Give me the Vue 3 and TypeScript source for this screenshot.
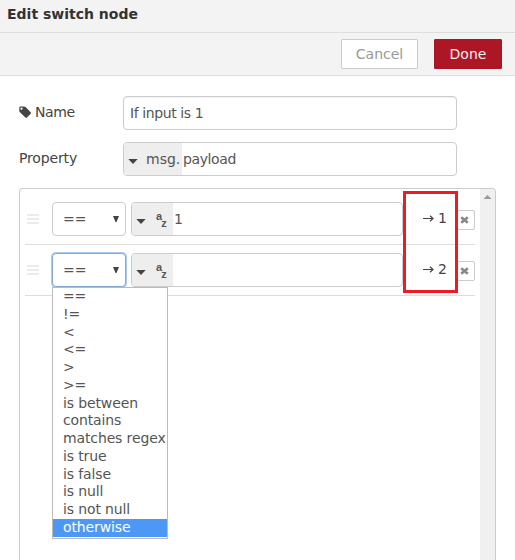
<script setup lang="ts">
interface Rule {
  id: number
  value: string
  focused: boolean
}

const rules: Rule[] = [
  { id: 1, value: '1', focused: false },
  { id: 2, value: '', focused: true },
]

const operators: string[] = [
  '==', '!=', '<', '<=', '>', '>=', 'is between', 'contains',
  'matches regex', 'is true', 'is false', 'is null', 'is not null', 'otherwise',
]
const selected = 'otherwise'
</script>

<template>
  <div class="tray">
    <header class="title">Edit switch node</header>
    <div class="toolbar">
      <button class="btn">Cancel</button>
      <button class="btn primary">Done</button>
    </div>
    <main class="form">
      <div class="field">
        <label class="label tight">
          <svg class="tag" width="13" height="13" viewBox="0 0 13 13">
            <path fill-rule="evenodd" d="M0.3 1.5Q0.3 0.5 1.3 0.5H5Q6 0.5 6.8 1.3L11.7 6.2Q12.5 7 11.7 7.8L8 11.6Q7.2 12.3 6.4 11.6L1.2 6.5Q0.3 5.7 0.3 4.7ZM2.5 1.6A1.1 1.1 0 1 0 2.5 3.8A1.1 1.1 0 1 0 2.5 1.6Z" />
          </svg>Name</label>
        <div class="box wide name">If input is 1</div>
      </div>
      <div class="field">
        <label class="label">Property</label>
        <div class="box wide">
          <span class="type msg"><svg class="caret" width="10" height="5" viewBox="0 0 10 5"><path d="M0.3 0H9.7L5 5Z" /></svg>msg.</span>
          <span class="payload">payload</span>
        </div>
      </div>
      <section class="list">
        <div class="rules">
          <div v-for="rule in rules" :key="rule.id" class="rule">
            <span class="grip"><i></i><i></i><i></i></span>
            <div class="select-wrap">
              <div class="box select" :class="{ focused: rule.focused }">
                <span>==</span>
                <svg width="6" height="6" viewBox="0 0 6 6"><path d="M0 0H6L3.5 6H2.5Z" /></svg>
              </div>
              <ul v-if="rule.focused" class="menu">
                <li v-for="op in operators" :key="op" :class="{ active: op === selected }">{{ op }}</li>
              </ul>
            </div>
            <div class="box value">
              <span class="type string">
                <svg class="caret" width="10" height="5" viewBox="0 0 10 5"><path d="M0.3 0H9.7L5 5Z" /></svg>
                <span class="az"><b>a</b><b class="z">z</b></span>
              </span>
              <span class="val">{{ rule.value }}</span>
            </div>
            <span class="output"><svg width="11" height="7" viewBox="0 0 11 7"><path d="M0 3.5H10M7 0.8L10 3.5L7 6.2" /></svg>{{ rule.id }}</span>
            <button class="remove">
              <svg width="9" height="8" viewBox="0 0 9 8"><path d="M1.2 1.2L7.8 6.8M7.8 1.2L1.2 6.8" /></svg>
            </button>
          </div>
          <div class="highlight"></div>
        </div>
        <div class="scrollbar"><i></i></div>
      </section>
    </main>
  </div>
</template>

<style>
body { margin: 0; overflow: hidden; }
</style>

<style scoped>
* { box-sizing: border-box; }
.tray {
  width: 515px; height: 560px; overflow: hidden;
  display: flex; flex-direction: column;
  background: #fff; color: #555;
  font: 14px/20px "DejaVu Sans", sans-serif;
}
.title {
  height: 33px; padding: 4px 7px; flex: none;
  background: #f3f3f3; border-bottom: 1px solid #ddd;
  color: #333; font-weight: bold;
}
.toolbar {
  height: 43px; flex: none; padding: 6px 13px 0 0;
  display: flex; justify-content: flex-end; gap: 16px;
  background: #f3f3f3; border-bottom: 1px solid #ddd;
}
.btn {
  height: 30px; width: 77px; padding: 0;
  font: inherit; color: #999; background: #fff;
  border: 1px solid #ccc; border-radius: 1px;
}
.btn.primary { width: 68px; background: #ad1625; border-color: #ad1625; color: #eee; }
.form {
  flex: 1; min-height: 0; padding: 20px 19px 0;
  display: flex; flex-direction: column; gap: 12px;
}
.field { display: flex; flex: none; }
.label { width: 104px; height: 32px; display: flex; align-items: center; color: #444; letter-spacing: -0.15px; }
.tight { letter-spacing: -0.4px; }
.tag { margin-right: 3px; fill: #444; }
.box {
  height: 34px; display: flex; align-items: center;
  border: 1px solid #ccc; border-radius: 4px; background: #fff;
}
.wide { width: 334px; }
.name { padding-left: 6px; letter-spacing: -0.4px; box-shadow: inset 0 1px 1px rgba(0, 0, 0, 0.06); }
.type {
  height: 32px; flex: none; display: flex; align-items: center;
  background: #eee; border-radius: 3px 0 0 3px;
}
.msg { width: 58px; padding-left: 4px; gap: 8px; }
.payload { padding-left: 1px; letter-spacing: -0.4px; }
.caret { flex: none; margin-top: 5px; fill: #444; }
.list {
  flex: 1; min-height: 0; display: flex;
  border: 1px solid #ccc; border-bottom: 0; border-radius: 4px 4px 0 0;
}
.rules { position: relative; width: 460px; padding: 5px 5px 0; }
.rule {
  height: 51px; padding-top: 8px; display: flex;
  border-bottom: 1px solid #ddd;
}
.grip {
  width: 12px; margin: 12px 13px 0 2px;
  display: flex; flex-direction: column; gap: 2px;
}
.grip i { height: 2px; background: #ebebeb; }
.select-wrap { position: relative; width: 74px; flex: none; }
.select { padding: 0 6px 0 10px; justify-content: space-between; }
.select svg { fill: #444; margin-bottom: 1px; }
.focused { border-color: #86a9d4; box-shadow: 0 0 0 1px #a9cbf5; }
.menu {
  position: absolute; z-index: 2; left: 0; top: 34px;
  width: 116px; height: 252px; margin: 0; padding: 0;
  list-style: none; background: #fff; border: 1px solid #bbb;
}
.menu li {
  height: 17.78px; padding-left: 10px; line-height: 17.78px;
  white-space: nowrap; letter-spacing: -0.13px;
}
.menu .active { background: #4e98f5; color: #fff; }
.value { width: 272px; flex: none; margin-left: 5px; }
.string { width: 41px; padding-left: 4px; }
.az {
  display: flex; margin-left: 10px; color: #555;
  font: bold 11px/10px "Liberation Sans", sans-serif; letter-spacing: -1px;
}
.az b { margin-bottom: 7px; }
.az .z { margin: 7px 0 0; }
.val { padding-left: 1px; }
.output { width: 54px; height: 32px; padding-left: 20px; flex: none; display: flex; align-items: center; gap: 4px; color: #444; }
.output svg { fill: none; stroke: #444; stroke-width: 1.2; }
.remove {
  width: 18px; height: 20px; margin-top: 8px; padding: 0;
  display: flex; align-items: center; justify-content: center;
  background: #fff; border: 1px solid #ccc; border-radius: 2px;
}
.remove svg { fill: none; stroke: #888; stroke-width: 2.6; margin: 0 3px 1px 0; }
.highlight {
  position: absolute; left: 383px; top: 2px;
  width: 55px; height: 102px; border: 3px solid #ed1c24;
}
.scrollbar { width: 15px; padding-top: 6px; background: #f0f0f0; border-radius: 0 3px 0 0; }
.scrollbar i {
  display: block; width: 8px; height: 4px; margin: 0 auto;
  background: #999; clip-path: polygon(50% 0, 100% 100%, 0 100%);
}
</style>
